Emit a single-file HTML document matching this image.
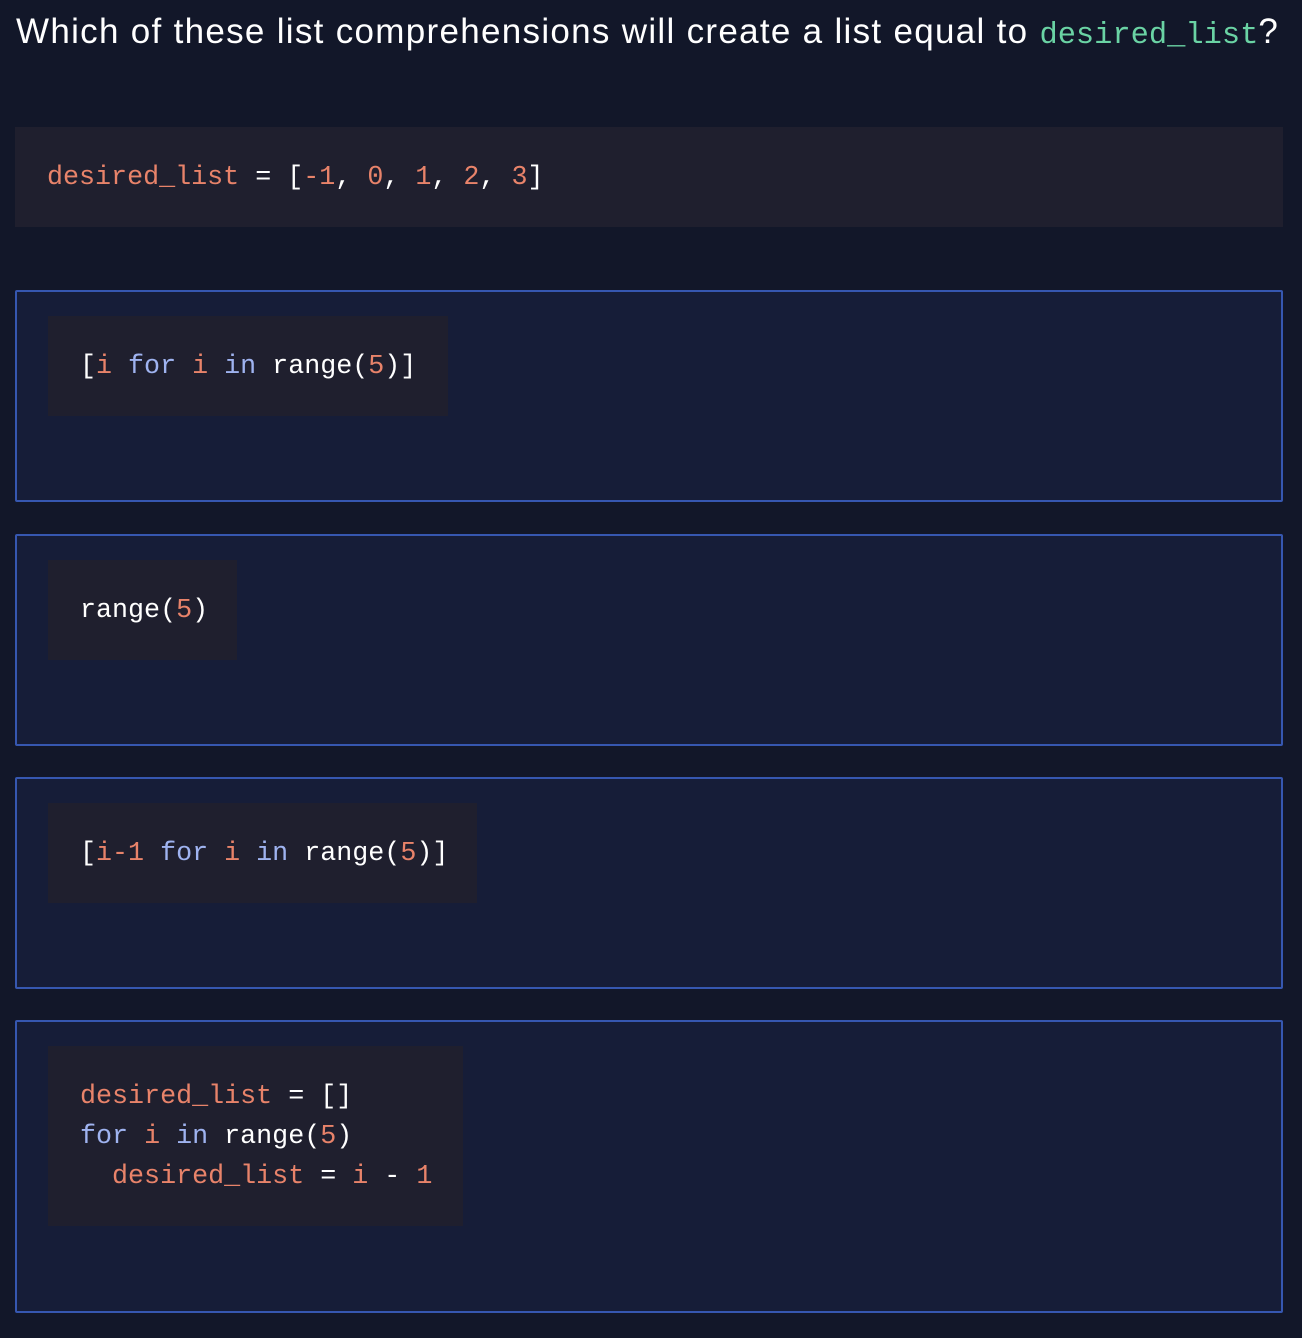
<!DOCTYPE html>
<html><head><meta charset="utf-8"><style>
*{margin:0;padding:0;box-sizing:border-box}
body{width:1302px;height:1338px;background:#121729;position:relative;overflow:hidden;font-family:"Liberation Sans",sans-serif}
.t{position:absolute;left:16px;top:12px;color:#fff;font-size:35px;white-space:nowrap;letter-spacing:1.3px}
.t code{font-family:"Liberation Mono",monospace;color:#6ad3a4;font-size:30.4px;letter-spacing:0}
.m{font-family:"Liberation Mono",monospace;font-size:26.7px;line-height:40px;white-space:pre;color:#fff}
.top{position:absolute;left:15px;top:127px;width:1268px;height:100px;background:#1f1f2e;padding:31px 32px}
.opt{position:absolute;left:15px;width:1268px;background:#161d38;border:2px solid #3657b0;border-radius:2px}
.cb{position:absolute;left:31px;top:24px;height:100px;background:#1f1f2e;padding:31px 32px}
.o{color:#e8836a}.b{color:#9fb3f0}
</style></head><body>
<div class="t">Which of these list comprehensions will create a list equal to <code>desired_list</code>?</div>
<div class="top m"><span class="o">desired_list</span> = [<span class="o">-1</span>, <span class="o">0</span>, <span class="o">1</span>, <span class="o">2</span>, <span class="o">3</span>]</div>
<div class="opt" style="top:290px;height:212px"><div class="cb m" style="width:400px">[<span class="o">i</span> <span class="b">for</span> <span class="o">i</span> <span class="b">in</span> range(<span class="o">5</span>)]</div></div>
<div class="opt" style="top:534px;height:212px"><div class="cb m" style="width:189px">range(<span class="o">5</span>)</div></div>
<div class="opt" style="top:777px;height:212px"><div class="cb m" style="width:429px">[<span class="o">i-1</span> <span class="b">for</span> <span class="o">i</span> <span class="b">in</span> range(<span class="o">5</span>)]</div></div>
<div class="opt" style="top:1020px;height:293px"><div class="cb m" style="width:415px;height:180px;padding-top:31px"><span class="o">desired_list</span> = []
<span class="b">for</span> <span class="o">i</span> <span class="b">in</span> range(<span class="o">5</span>)
  <span class="o">desired_list</span> = <span class="o">i</span> - <span class="o">1</span></div></div>
</body></html>
